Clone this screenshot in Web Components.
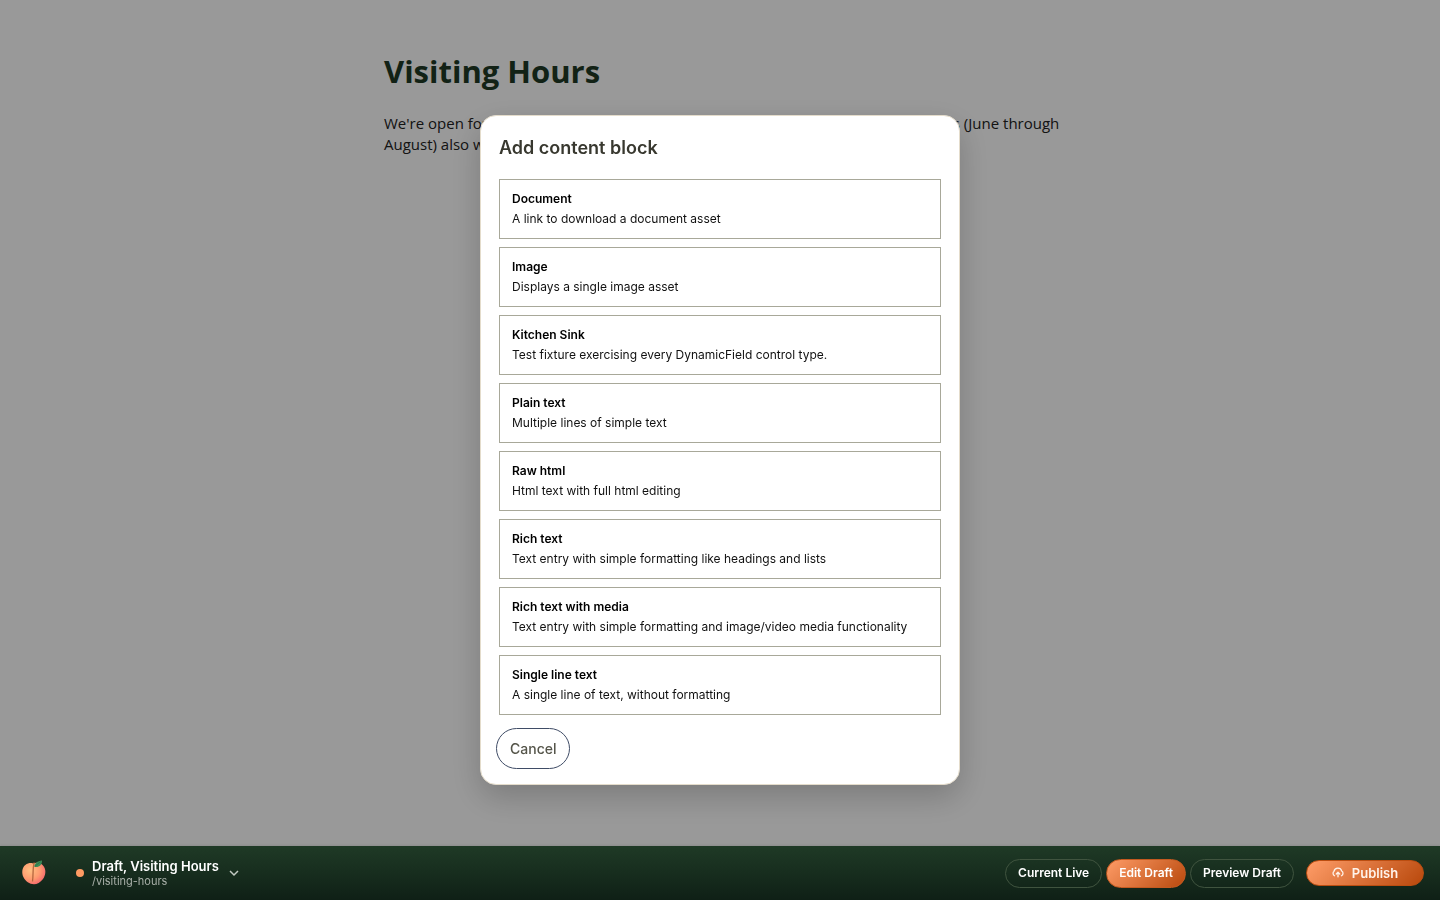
<!DOCTYPE html>
<html lang="en">
<head>
<meta charset="utf-8">
<title>Visiting Hours</title>
<style>
  html, body { height: 100%; margin: 0; }
  body { background: #fff; font-family: Inter, "Liberation Sans", sans-serif; }
</style>
</head>
<body>
<visiting-page>
  <span slot="title">Visiting Hours</span>
  We're open for visits every day of the week from 9am to 5pm; the summer months (June through August) also weekends.
</visiting-page>
<block-dialog heading="Add content block">
  <block-option name="Document">A link to download a document asset</block-option>
  <block-option name="Image">Displays a single image asset</block-option>
  <block-option name="Kitchen Sink">Test fixture exercising every DynamicField control type.</block-option>
  <block-option name="Plain text">Multiple lines of simple text</block-option>
  <block-option name="Raw html">Html text with full html editing</block-option>
  <block-option name="Rich text">Text entry with simple formatting like headings and lists</block-option>
  <block-option name="Rich text with media">Text entry with simple formatting and image/video media functionality</block-option>
  <block-option name="Single line text">A single line of text, without formatting</block-option>
</block-dialog>
<editor-bar>
  <page-status slot="start" path="/visiting-hours">Draft, Visiting Hours</page-status>
  <mode-button>Current Live</mode-button>
  <mode-button active>Edit Draft</mode-button>
  <mode-button>Preview Draft</mode-button>
  <publish-button slot="end">Publish</publish-button>
</editor-bar>
<script>
const define = (name, render) => customElements.define(name, class extends HTMLElement {
  constructor() {
    super();
    const t = document.createElement('template');
    t.innerHTML = render(this);
    this.attachShadow({ mode: 'open' }).append(t.content.cloneNode(true));
  }
});

define('visiting-page', () => `
  <style>
    :host { display: block; box-sizing: border-box; max-width: 736px; margin: 0 auto; padding: 48px 16px 0 32px;
      font-family: "Segoe UI", "Open Sans", "Noto Sans", sans-serif; color: #222; }
    h1 { margin: 0 0 19px; font-size: 31px; line-height: 46px; font-weight: 700; color: #1e3a26; }
    p { margin: 0; font-size: 15px; line-height: 21px; }
  </style>
  <main><h1><slot name="title"></slot></h1><p><slot></slot></p></main>`);

define('block-dialog', el => `
  <style>
    :host { position: fixed; inset: 0; display: grid; place-items: center; background: rgba(0,0,0,.4); }
    section { box-sizing: border-box; width: 480px; max-width: 100%; padding: 18px; background: #fff;
      border: 1px solid #e4dccb; border-radius: 16px; box-shadow: 0 12px 32px rgba(0,0,0,.2); }
    h2 { margin: 0 0 18px; font-size: 18px; line-height: 27px; font-weight: 600; color: #38382f; }
    .list { display: grid; gap: 8px; margin-bottom: 16px; }
    button { display: block; height: 35px; padding: 0 11px; border: 0; border-radius: 18px; background: none;
      font: 500 14px/21px Inter, sans-serif; color: #55554a; outline: 1px solid #3f4c66; outline-offset: 2px; }
  </style>
  <section role="dialog" aria-labelledby="h">
    <h2 id="h">${el.getAttribute('heading')}</h2>
    <div class="list"><slot></slot></div>
    <button type="button">Cancel</button>
  </section>`);

define('block-option', el => `
  <style>
    :host { display: block; }
    button { display: block; width: 100%; padding: 9px 12px; border: 1px solid #a8a899; background: #fff;
      text-align: left; font: 400 12px/20px Inter, sans-serif; color: #111; }
    strong, span { display: block; }
    strong { font-weight: 600; color: #000; }
  </style>
  <button type="button"><strong>${el.getAttribute('name')}</strong><span><slot></slot></span></button>`);

define('editor-bar', () => `
  <style>
    :host { position: fixed; left: 0; right: 0; bottom: 0; display: block; }
    nav { display: flex; align-items: center; box-sizing: border-box; height: 54px; padding: 0 16px 0 20px;
      background: linear-gradient(#1f3a26, #0f2016); box-shadow: 0 -1px 2px rgba(0,0,0,.08); }
    a { display: flex; margin-right: 28px; }
    .modes { display: flex; gap: 4px; margin: 0 12px 0 auto; }
  </style>
  <nav aria-label="Editor">
    <a href="#" aria-label="Home">
      <svg width="28" height="28" viewBox="0 0 28 28">
        <defs>
          <radialGradient id="p" cx=".35" cy=".35" r=".75"><stop offset="0" stop-color="#ffc183"/><stop offset=".55" stop-color="#ff9b70"/><stop offset="1" stop-color="#f4606c"/></radialGradient>
        </defs>
        <path d="M13 4.500C16 3.200 20 3.500 22.800 6.200C26.500 10 26 16 22.800 20.300C20.500 23.300 17 25.300 14 25.300C9.500 25.300 5.500 22.300 3.500 18.300C1.500 14 1.900 8.500 5.300 5.900C8 4 11 3.700 13 4.500Z" fill="url(#p)"/>
        <path d="M14.300 3.500C12.500 9 13.500 15 12.500 22.500" fill="none" stroke="#b5673f" stroke-width="1.300"/>
        <path d="M14.300 7.800C14.300 4.200 17.500 1.800 22 1.400C22.200 5.800 18.800 8.800 14.300 7.800Z" fill="#3b8b58"/>
        <path d="M15 7.200L20.500 2.800" stroke="#286b42" stroke-width=".7"/>
      </svg>
    </a>
    <slot name="start"></slot>
    <div class="modes"><slot></slot></div>
    <slot name="end"></slot>
  </nav>`);

define('page-status', el => `
  <style>
    :host { display: block; }
    button { display: flex; align-items: center; gap: 8px; padding: 0; border: 0; background: none; text-align: left;
      font-family: Inter, sans-serif; }
    i { width: 8px; height: 8px; border-radius: 50%; background: #ff9b63; }
    strong, small { display: block; }
    strong { font-size: 13px; line-height: 16px; font-weight: 600; color: #fff; }
    small { font-size: 11px; line-height: 14px; color: #a9b0a9; }
    svg { display: block; }
  </style>
  <button type="button" aria-haspopup="true">
    <i></i><span><strong><slot></slot></strong><small>${el.getAttribute('path')}</small></span>
    <svg width="14" height="14" viewBox="0 0 14 14"><path d="M3 5l4 4 4-4" fill="none" stroke="#c3cac3" stroke-width="1.500"/></svg>
  </button>`);

define('mode-button', () => `
  <style>
    :host { display: block; }
    button { box-sizing: border-box; height: 29px; padding: 0 12px; border: 1px solid #40543f; border-radius: 15px;
      background: none; color: #fff; font: 600 12px/16px Inter, sans-serif; }
    :host([active]) button { border-color: #c45a20; background: linear-gradient(135deg, #ff9d68, #b8480c) border-box; }
  </style>
  <button type="button"><slot></slot></button>`);

define('publish-button', () => `
  <style>
    :host { display: block; }
    button { display: flex; align-items: center; justify-content: center; gap: 8px; box-sizing: border-box; width: 118px; height: 26px;
      padding: 0; border: 1px solid #bb4d10; border-radius: 13px; color: #fff3ea;
      background: linear-gradient(135deg, #ff9d68, #b8480c); font: 600 13px/16px Inter, sans-serif; }
    svg { display: block; }
  </style>
  <button type="button">
    <svg width="12" height="12" viewBox="0 0 24 24" fill="none" stroke="currentColor" stroke-width="2.600" stroke-linecap="round" stroke-linejoin="round"><path d="M5 17.500A5.500 5.500 0 0 1 4 8.500A8 8 0 0 1 19.500 8A5.500 5.500 0 0 1 19 17.500M12 19.500V11M8.500 14L12 10.500L15.500 14"/></svg>
    <slot></slot>
  </button>`);
</script>
</body>
</html>
